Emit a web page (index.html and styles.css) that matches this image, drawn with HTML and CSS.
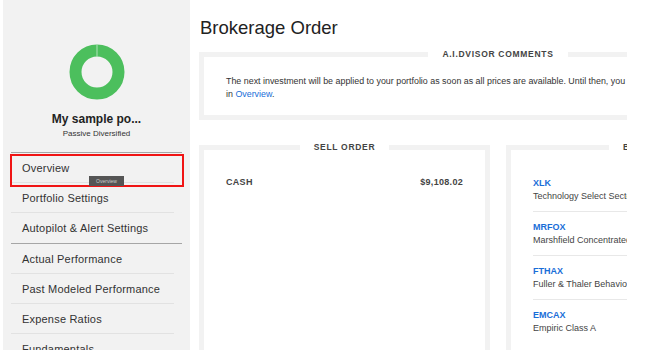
FILE: index.html
```html
<!DOCTYPE html>
<html lang="en">
<head>
    <meta charset="UTF-8">
    <meta name="viewport" content="width=device-width, initial-scale=1.0">
    <title>Brokerage Order</title>
    <link rel="stylesheet" href="styles.css">
</head>
<body>

<div class="page">
    <!-- Sidebar -->
    <aside class="sidebar">
        <div class="portfolio">
            <svg class="donut" width="56" height="56" viewBox="0 0 56 56">
                <circle cx="28" cy="28" r="21.5" fill="none" stroke="#4cbf5d" stroke-width="12"/>
                <line x1="28" y1="0.5" x2="28" y2="12.5" stroke="#c9ecd0" stroke-width="0.8"/>
            </svg>
            <div class="portfolio-name">My sample po...</div>
            <div class="portfolio-type">Passive Diversified</div>
        </div>

        <ul class="nav">
            <li class="nav-item marked">
                Overview
                <span class="tooltip">Overview</span>
            </li>
            <li class="nav-item">Portfolio Settings</li>
            <li class="nav-item last">Autopilot &amp; Alert Settings</li>
        </ul>
        <ul class="nav">
            <li class="nav-item">Actual Performance</li>
            <li class="nav-item">Past Modeled Performance</li>
            <li class="nav-item">Expense Ratios</li>
            <li class="nav-item">Fundamentals</li>
        </ul>
    </aside>

    <!-- Main content -->
    <main class="main">
        <div class="main-inner">
            <h1>Brokerage Order</h1>

            <fieldset class="panel comments">
                <legend>A.I.DVISOR COMMENTS</legend>
                <p>The next investment will be applied to your portfolio as soon as all prices are available. Until then, you can review your portfolio <span class="nowrap">in <a href="#">Overview</a>.</span></p>
            </fieldset>

            <div class="orders">
                <fieldset class="panel">
                    <legend>SELL ORDER</legend>
                    <div class="sell-row">
                        <span>CASH</span>
                        <span>$9,108.02</span>
                    </div>
                </fieldset>

                <fieldset class="panel">
                    <legend>BUY ORDER</legend>
                    <ul class="buy-list">
                        <li>
                            <a href="#" class="ticker">XLK</a>
                            <div class="fund-name">Technology Select Sector SPDR Fund</div>
                        </li>
                        <li>
                            <a href="#" class="ticker">MRFOX</a>
                            <div class="fund-name">Marshfield Concentrated Opportunity</div>
                        </li>
                        <li>
                            <a href="#" class="ticker">FTHAX</a>
                            <div class="fund-name">Fuller &amp; Thaler Behavioral Small-Cap</div>
                        </li>
                        <li>
                            <a href="#" class="ticker">EMCAX</a>
                            <div class="fund-name">Empiric Class A</div>
                        </li>
                    </ul>
                </fieldset>
            </div>
        </div>
    </main>
</div>

</body>
</html>
```

FILE: styles.css
```css
/* General styling */
* {
    box-sizing: border-box;
}

body {
    margin: 0;
    background: #ffffff;
    font-family: "Liberation Sans", Arial, sans-serif;
    color: #333333;
}

.page {
    display: flex;
    height: 350px;
    padding-left: 3px;
    overflow: hidden;
}

/* Sidebar */
.sidebar {
    width: 187px;
    flex-shrink: 0;
    background: #f2f2f2;
    padding: 44px 0 0 8px;
}

.portfolio {
    width: 171px;
    text-align: center;
    border-bottom: 1.5px solid #a6a6a6;
    padding-bottom: 14px;
}

.donut {
    display: block;
    margin: 0 auto;
}

.portfolio-name {
    margin-top: 12px;
    font-size: 12px;
    font-weight: bold;
    color: #222222;
}

.portfolio-type {
    margin-top: 3px;
    font-size: 8px;
    color: #333333;
}

.nav {
    list-style: none;
    margin: 0;
    padding: 0;
    width: 171px;
}

.nav + .nav {
    border-top: 1.5px solid #a6a6a6;
}

.nav-item {
    position: relative;
    width: 163px;
    height: 30px;
    line-height: 30px;
    padding-left: 11px;
    font-size: 11px;
    letter-spacing: 0.2px;
    color: #333333;
    border-bottom: 1px solid #e2e2e2;
}

.nav-item.last {
    border-bottom: none;
}

/* Red highlight around the current item */
.nav-item.marked::after {
    content: "";
    position: absolute;
    left: -1px;
    top: 1px;
    width: 170px;
    height: 29px;
    border: 2px solid #f01414;
}

.tooltip {
    position: absolute;
    left: 78px;
    top: 23px;
    width: 35px;
    height: 10px;
    line-height: 10px;
    background: #555555;
    color: #cccccc;
    font-size: 5px;
    text-align: center;
    letter-spacing: 0;
    z-index: 2;
}

/* Main content */
.main {
    width: 437px;
    flex-shrink: 0;
    overflow: hidden;
}

.main-inner {
    width: 620px;
    padding-left: 9px;
}

h1 {
    margin: 16px 0 0 1px;
    font-size: 18.5px;
    font-weight: normal;
    color: #222222;
    line-height: 24px;
}

.panel {
    margin: 0;
    border: 5px solid #f2f2f2;
    padding: 0 22px;
    min-width: 0;
}

.panel legend {
    margin: 0 auto;
    padding: 0 14px;
    font-size: 8.5px;
    font-weight: bold;
    letter-spacing: 0.7px;
    color: #444444;
    line-height: 11px;
}

.comments {
    width: 598px;
    margin-top: 9px;
    padding-top: 15px;
    padding-bottom: 14px;
}

.comments p {
    margin: 0;
    font-size: 8.9px;
    line-height: 13px;
    color: #333333;
}

.nowrap {
    white-space: nowrap;
}

.comments a,
.ticker {
    color: #1a6ed8;
    text-decoration: none;
}

.orders {
    display: flex;
    gap: 16px;
    width: 598px;
    margin-top: 22px;
}

.orders .panel {
    width: 291px;
    height: 240px;
    padding-top: 24px;
}

.sell-row {
    display: flex;
    justify-content: space-between;
    font-size: 9px;
    font-weight: bold;
    letter-spacing: 0.3px;
    color: #444444;
}

.buy-list {
    list-style: none;
    margin: 0;
    padding: 0;
}

.buy-list li {
    padding-bottom: 8px;
    border-bottom: 1px solid #e8e8e8;
    margin-bottom: 9px;
    white-space: nowrap;
}

.buy-list li:last-child {
    border-bottom: none;
}

.ticker {
    display: block;
    font-size: 9px;
    font-weight: bold;
    line-height: 13px;
}

.fund-name {
    font-size: 9px;
    line-height: 13px;
    color: #444444;
}
```
